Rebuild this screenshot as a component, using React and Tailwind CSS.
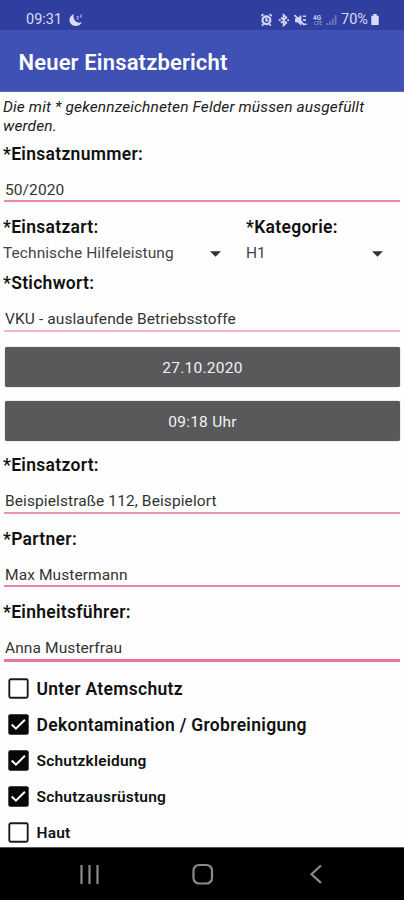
function Label({ children }) {
  return (
    <div className="h-6 pt-px pl-[3px] text-[17.5px] font-semibold leading-6 tracking-[0.3px] text-[#111] whitespace-nowrap">
      {children}
    </div>
  );
}

function Field({ label, value, line = "h-[37px] border-b border-[#e26a90]", className = "" }) {
  return (
    <div className={`shrink-0 ${className}`}>
      <Label>{label}</Label>
      <div className={`mx-1 pt-[12.5px] pl-px text-[15.5px] leading-6 tracking-[0.1px] text-[#333] whitespace-nowrap ${line}`}>
        {value}
      </div>
    </div>
  );
}

function Caret() {
  return (
    <svg className="h-[6px] w-[11px]" viewBox="0 0 11 6">
      <path d="M0 0.2h11L5.5 5.8z" fill="#333" />
    </svg>
  );
}

function Check({ checked, children, className }) {
  return (
    <div className="flex h-9 items-center gap-2 pl-[7.5px]">
      <svg className="size-[21px] shrink-0" viewBox="0 0 21 21">
        {checked ? (
          <>
            <rect x="0.3" y="0.3" width="20.4" height="20.4" rx="2" fill="#080808" />
            <path d="M3.7 10.5l4.2 4.2 9-9" fill="none" stroke="#fff" strokeWidth="2" />
          </>
        ) : (
          <rect x="1.3" y="1.3" width="18.4" height="18.4" rx="1.5" fill="#fff" stroke="#1c1c1c" strokeWidth="1.9" />
        )}
      </svg>
      <span className={`pt-[3px] font-semibold text-[#111] whitespace-nowrap ${className}`}>{children}</span>
    </div>
  );
}

function StatusIcons() {
  return (
    <svg className="h-[16px] w-[80px]" viewBox="0 0 80 16" fill="none" stroke="#d3d7f4">
      <circle cx="5.4" cy="8.2" r="3.9" strokeWidth="2.2" />
      <path d="M5.3 5.8v2.8h2M0.4 4.2l2-2M10.8 4.2l-2.2-2M1 13.7l1.6-1.6M9.8 13.7l-1.6-1.6" strokeWidth="1.8" />
      <path d="M20 5.5l5.4 5.3-2.8 2.6V3l2.8 2.6-5.4 5.3M17.7 8.2h2M26.3 8.2h1.8" strokeWidth="1.7" />
      <path d="M34.5 6.5h2.2l3.3-3v9.6l-3.3-3h-2.2z" fill="#d3d7f4" strokeWidth="0.8" />
      <path d="M33.5 3.1l10 10M41.9 4.3h3M42.1 8.1h2.9M42.5 12.3h3.2" strokeWidth="1.6" />
      <g fill="#c3c9ee" stroke="none" fontFamily="Roboto, sans-serif" fontWeight="700">
        <text x="52" y="7.5" fontSize="6.5">4G</text>
        <text x="53" y="13.1" fontSize="5" opacity="0.55">LTE</text>
      </g>
      <path d="M66.3 13v-2M69 13V9.5M71.8 13V7M74.6 13V3" stroke="#6c79c9" strokeWidth="1.7" />
    </svg>
  );
}

export default function App() {
  return (
    <div className="flex h-[900px] w-[404px] flex-col overflow-hidden bg-[#fefefe] font-[Roboto,sans-serif]">
      <div className="flex h-[30px] shrink-0 items-center bg-[#303f9f] pt-[9px] pl-[26px] text-[#d9dcf6]">
        <span className="w-[43px] text-[14.5px] leading-5">09:31</span>
        <svg className="h-[14px] w-[14px]" viewBox="0 0 14 14">
          <path d="M4.8 1C-0.6 3.3-0.8 9.6 3.2 12c3.6 2.2 8.2.6 9.7-2.8C8.400 11 3.200 7 4.800 1z" fill="#d9dcf6" />
          <path d="M7.500 3.500h2.200L7.700 6h2.300M11 2h1.800l-1.600 2h1.800" fill="none" stroke="#a4ade2" strokeWidth="0.9" />
        </svg>
        <div className="ml-auto flex items-center pr-[25px]">
          <StatusIcons />
          <span className="w-[30px] text-[14.5px] leading-5">70%</span>
          <svg className="h-[13px] w-[8px]" viewBox="0 0 8 13">
            <path d="M2.3 1h3.4v1.7h2V12H.3V2.7h2z" fill="#d9dcf6" />
          </svg>
        </div>
      </div>
      <header className="flex h-[62px] shrink-0 items-center border-b border-[#5868c0] bg-[#3f51b5] pt-[3px] pl-[18.5px]">
        <h1 className="text-[22px] font-semibold tracking-[0.15px] text-white whitespace-nowrap">Neuer Einsatzbericht</h1>
      </header>

      <main className="flex h-[755px] shrink-0 flex-col overflow-hidden">
        <p className="mt-[5px] h-[44px] shrink-0 pt-px pl-[3px] text-[15.5px] leading-[18.5px] tracking-[0.13px] text-[#222] italic whitespace-nowrap">
          Die mit * gekennzeichneten Felder müssen ausgefüllt
          <br />
          werden.
        </p>
        <Field label="*Einsatznummer:" value="50/2020" line="h-[37px] border-b-2 border-[#e88ba7]" />
        <div className="mt-[12px] flex h-[56px] shrink-0">
          <div className="w-[243px]">
            <Label>*Einsatzart:</Label>
            <div className="flex h-[31px] items-center justify-between pt-px pr-[22px] pl-[3px] text-[15.5px] tracking-[0.07px] text-[#444]">
              <span>Technische Hilfeleistung</span>
              <Caret />
            </div>
          </div>
          <div className="flex-1">
            <Label>*Kategorie:</Label>
            <div className="flex h-[31px] items-center justify-between pt-px pr-[21px] pl-[3px] text-[15.5px] text-[#444]">
              <span>H1</span>
              <Caret />
            </div>
          </div>
        </div>
        <Field label="*Stichwort:" value="VKU - auslaufende Betriebsstoffe" line="h-[38px] border-b-2 border-[#f5b5ca]" />
        <div className="mr-1 ml-[5px] mt-[15px] flex h-[40px] shrink-0 items-center justify-center rounded-[2px] bg-[#59595b] text-[15.5px] tracking-[0.25px] text-[#f2f2f2] shadow-[0_0_1px_#555]">
          <span className="pt-[4px]">27.10.2020</span>
        </div>
        <div className="mr-1 ml-[5px] mt-[14px] flex h-[40px] shrink-0 items-center justify-center rounded-[2px] bg-[#59595b] text-[15.5px] tracking-[0.25px] text-[#f2f2f2] shadow-[0_0_1px_#555]">
          <span className="pt-[4px]">09:18 Uhr</span>
        </div>
        <Field className="mt-[11px]" label="*Einsatzort:" value="Beispielstraße 112, Beispielort" line="h-[38px] border-b-2 border-[#ec94b0]" />
        <Field className="mt-[12px]" label="*Partner:" value="Max Mustermann" line="h-[37px] border-b-2 border-[#ec86a6]" />
        <Field className="mt-[12px]" label="*Einheitsführer:" value="Anna Musterfrau" line="h-[39px] border-b-3 border-[#e8769a]" />
        <div className="mt-[8px] shrink-0">
          <Check className="text-[17.5px] tracking-[0.3px]">Unter Atemschutz</Check>
          <Check checked className="text-[17.5px] tracking-[0.3px]">Dekontamination / Grobreinigung</Check>
          <Check checked className="text-[15.5px] tracking-[0.2px]">Schutzkleidung</Check>
          <Check checked className="text-[15.5px] tracking-[0.2px]">Schutzausrüstung</Check>
          <Check className="text-[15.5px] tracking-[0.2px]">Haut</Check>
        </div>
      </main>

      <nav className="h-[53px] shrink-0 border-t border-[#555] bg-black">
        <svg className="h-[52px] w-[404px]" viewBox="0 0 404 52" fill="none" stroke="#8b8b8b" strokeWidth="2.2">
          <path d="M81.5 17v19M89.5 17v19M97.5 17v19" />
          <rect x="193.5" y="17" width="18.5" height="18.5" rx="5.5" />
          <path d="M321 17.5l-9.5 8.7 9.5 8.7" />
        </svg>
      </nav>
    </div>
  );
}
